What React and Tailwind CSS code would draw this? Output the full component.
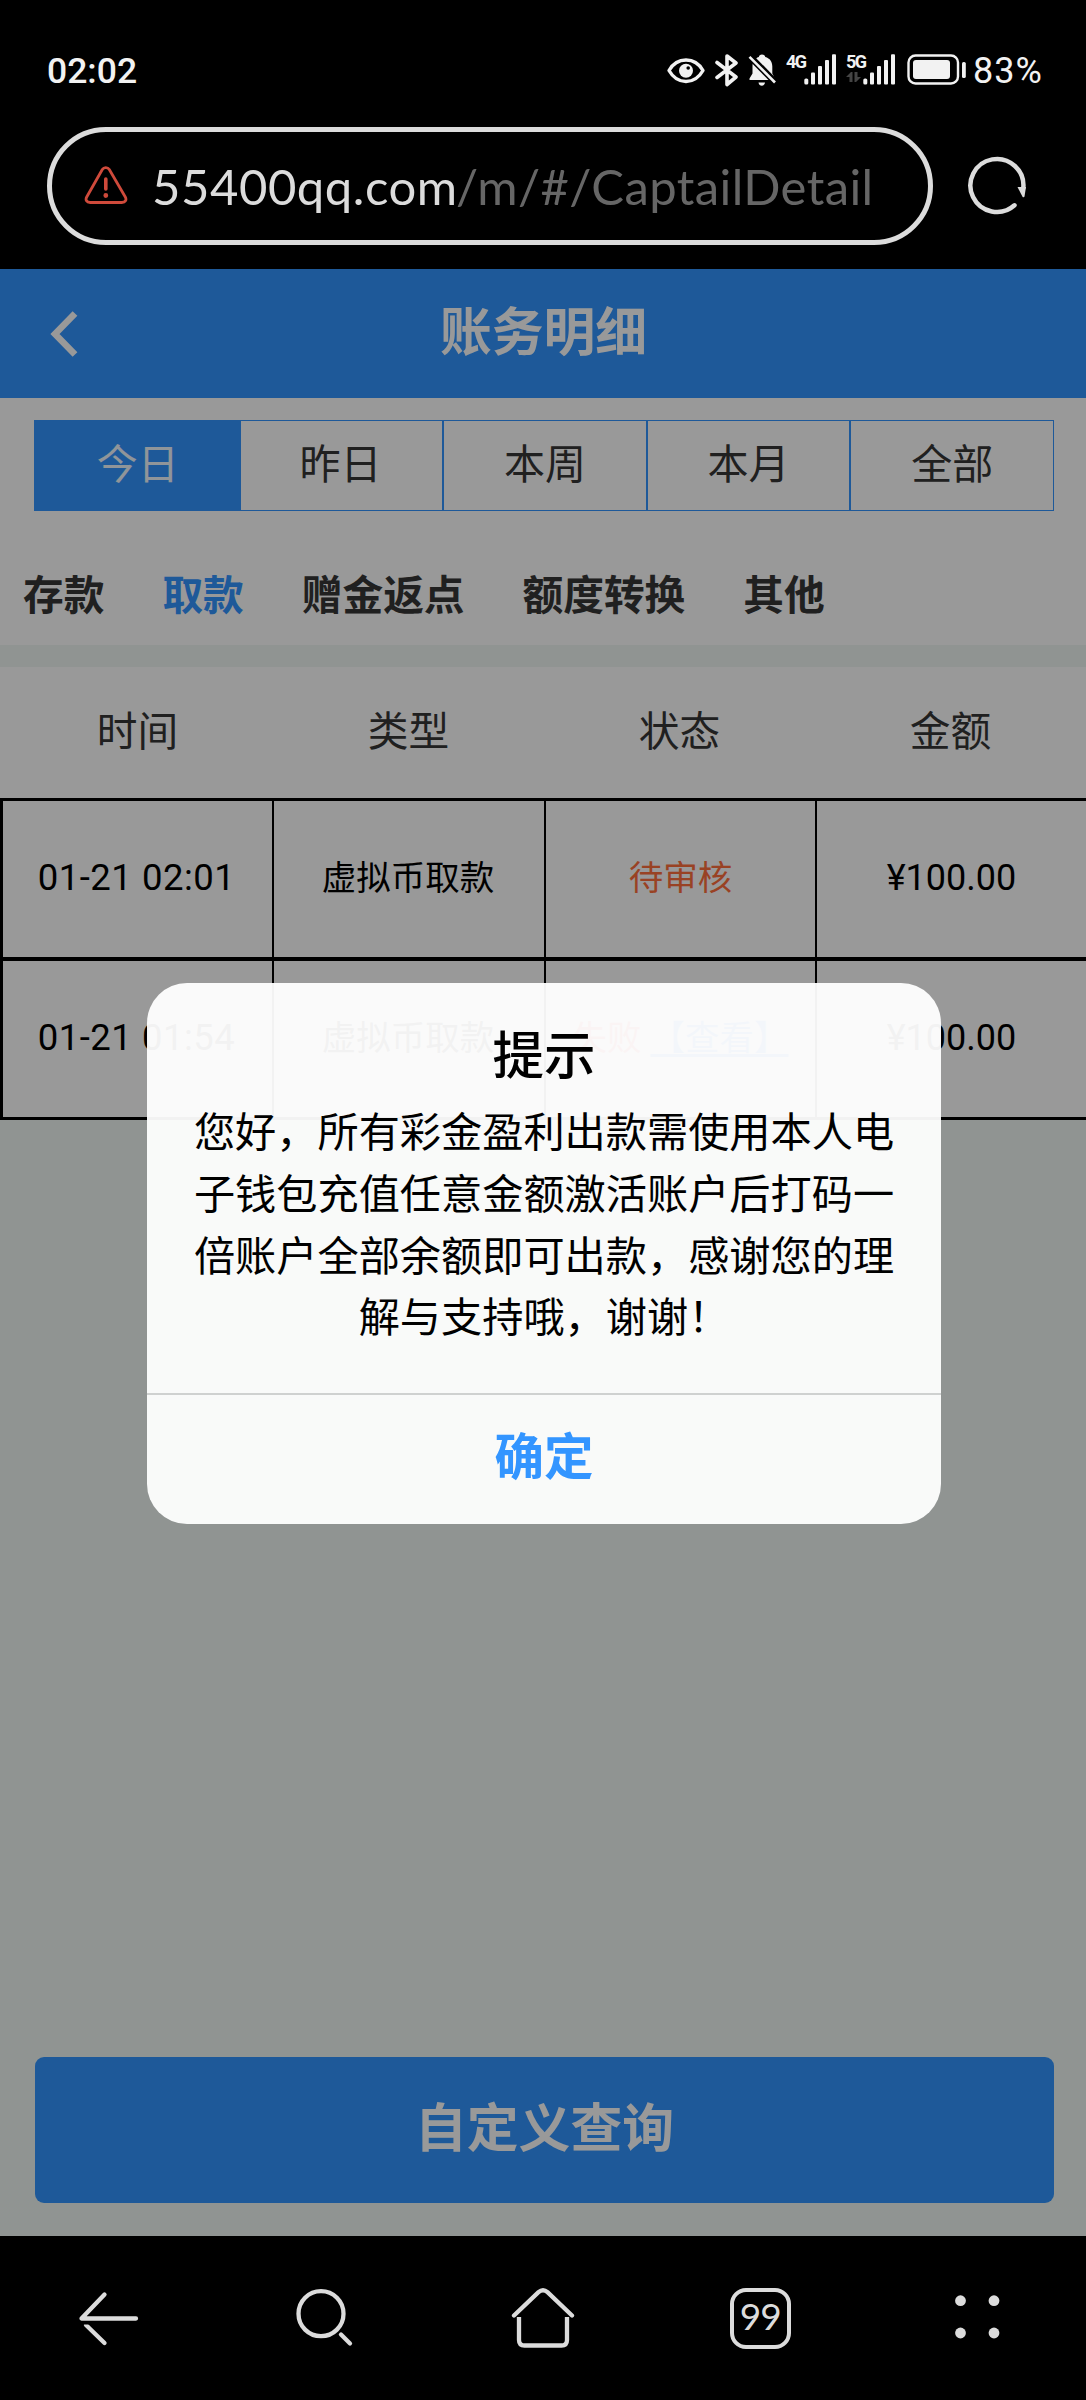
import { useState } from "react";

const RANGES = ["今日", "昨日", "本周", "本月", "全部"];
const CATEGORIES = ["存款", "取款", "赠金返点", "额度转换", "其他"];
const COLUMNS = ["时间", "类型", "状态", "金额"];
const RECORDS = [
  { time: "01-21 02:01", type: "虚拟币取款", status: "pending", money: "¥100.00" },
  { time: "01-21 01:54", type: "虚拟币取款", status: "failed", money: "¥100.00" },
];

const SignalBars = () => (
  <svg width="33" height="31" viewBox="0 0 33 31" fill="#f2f2f2">
    <rect x="0.3" y="24.5" width="4" height="6" rx="1.6" />
    <rect x="7" y="18.5" width="4" height="12" rx="1" />
    <rect x="14" y="12" width="4" height="18.5" rx="1" />
    <rect x="21" y="6" width="4" height="24.5" rx="1" />
    <rect x="28" y="0.3" width="4" height="30.2" rx="1" />
  </svg>
);

const StatusBar = () => (
  <div className="flex h-[127px] items-start justify-between pt-[53px] pl-[47px] pr-[41px] text-[#f2f2f2]">
    <div className="pt-px font-['Roboto'] text-[35.5px] leading-[34px] font-medium">
      02:02
    </div>
    <div className="flex h-[34px] items-start">
      <svg width="38" height="34" viewBox="0 0 38 34" fill="none">
        <path
          d="M2 17.5C6 10.5 12 7 19 7s13 3.500 17 10.500C32 24.500 26 28.500 19 28.500S6 24.500 2 17.500Z"
          stroke="#f2f2f2"
          strokeWidth="3.400"
          strokeLinejoin="round"
        />
        <circle cx="19" cy="17.700" r="7" fill="#f2f2f2" />
        <circle cx="21.200" cy="15" r="1.800" fill="#000" />
      </svg>
      <svg className="ml-[10px]" width="24" height="34" viewBox="0 0 24 34" fill="none">
        <path
          d="M2 9.500l19 14.500-9 7.500V3l9 7L2 24.500"
          stroke="#f2f2f2"
          strokeWidth="3.600"
          strokeLinejoin="round"
          strokeLinecap="round"
        />
      </svg>
      <svg className="ml-[9px]" width="30" height="34" viewBox="0 0 30 34">
        <path
          d="M14 1.500c2 0 3 1.200 3.300 2.600 4.700 1.300 7 4.900 7 9.400v7l2.500 5v1.500H1.500v-1.500l3-5v-7c0-4.500 2.200-8.100 6.300-9.400.3-1.400 1.300-2.600 3.200-2.600Z"
          fill="#f2f2f2"
        />
        <path d="M10.500 29.500h6.500c-.4 2.200-1.600 3.200-3.200 3.200s-2.900-1-3.300-3.200Z" fill="#f2f2f2" />
        <path d="M0 1.500L29 31" stroke="#000" strokeWidth="6.500" />
        <path d="M1.500 3.800L27 29.500" stroke="#f2f2f2" strokeWidth="2.600" />
      </svg>
      <div className="ml-[8px] w-[18px] font-['Roboto'] text-[18px] leading-[18px] font-bold tracking-[-1.5px]">
        4G
      </div>
      <div className="mt-px">
        <SignalBars />
      </div>
      <div className="ml-[9px] w-[17px]">
        <div className="font-['Roboto'] text-[18px] leading-[18px] font-bold tracking-[-1.5px]">
          5G
        </div>
        <svg width="15" height="12" viewBox="0 0 15 12" fill="#444">
          <path d="M0 6l5-5h1.500v10H3.500V6ZM8.500 1h3v5H15l-5 5H8.500Z" />
        </svg>
      </div>
      <div className="mt-px">
        <SignalBars />
      </div>
      <svg className="ml-[11px]" width="60" height="34" viewBox="0 0 60 34">
        <rect x="1.500" y="2.500" width="49.500" height="28" rx="7" fill="none" stroke="#f2f2f2" strokeWidth="2.400" />
        <rect x="6" y="7" width="37" height="19" rx="3" fill="#f2f2f2" />
        <rect x="55" y="9" width="3.800" height="16" rx="1.600" fill="#f2f2f2" />
      </svg>
      <div className="ml-[6px] w-[72px] pt-px font-['Roboto'] text-[36px] leading-[34px] tracking-[1px] whitespace-nowrap">
        83%
      </div>
    </div>
  </div>
);

const AddressBar = () => (
  <div className="flex h-[142px] items-start pl-[47px]">
    <div className="flex h-[118px] w-[886px] items-center rounded-full border-[5px] border-[#dcdcdc] pl-[32px]">
      <svg width="44" height="42" viewBox="0 0 44 42" fill="none" stroke="#cf4a3b">
        <path
          d="M18.300 4.500c1.600-2.600 5.400-2.600 7 0l16 27.500c1.500 2.700.2 5.500-3.500 5.500H6.200c-3.700 0-5-2.800-3.500-5.500Z"
          strokeWidth="2.800"
        />
        <path d="M21.800 14v10" strokeWidth="3.600" strokeLinecap="round" />
        <circle cx="21.800" cy="30.500" r="1.600" strokeWidth="1.600" fill="#cf4a3b" />
      </svg>
      <div className="ml-[24px] flex font-['Lato'] text-[49px] leading-[60px] whitespace-nowrap">
        <span className="w-[304px] tracking-[0.55px] text-[#dcdcdc]">
          55400qq.com
        </span>
        <span className="tracking-[0.4px] text-[#666]">/m/#/CaptailDetail</span>
      </div>
    </div>
    <svg className="mt-[28px] ml-[34px]" width="62" height="62" viewBox="0 0 62 62" fill="none">
      <path
        d="M47.500 50.300A26.500 26.500 0 1 1 56.300 33"
        stroke="#dcdcdc"
        strokeWidth="4.500"
        strokeLinecap="round"
      />
      <path d="M50.500 32h8.500l-1.500 9.500c-.3 1-1.500 1-2 .2Z" fill="#dcdcdc" />
    </svg>
  </div>
);

const RecordStatus = ({ status }) => {
  if (status == "pending") {
    return <span className="text-[#ff6f3c]">待审核</span>;
  }

  return (
    <>
      <span className="mr-[9px] text-[#ff4d4f]">失败</span>
      <span className="text-[#3395ff] underline underline-offset-4">【查看】</span>
    </>
  );
};

const Page = ({ range, setRange, category, setCategory }) => (
  <div className="flex h-full flex-col bg-[#f0f7f3]">
    <div className="flex h-[129px] items-center bg-[#3395ff]">
      <svg className="ml-[48px]" width="32" height="52" viewBox="0 0 32 52" fill="none">
        <path d="M27 5.500L7 26l20 20.500" stroke="#fff" strokeWidth="6.600" />
      </svg>
      <div className="flex-1 pr-[79px] pb-[9px] text-center text-[51.8px] leading-[60px] font-bold text-white">
        账务明细
      </div>
    </div>

    <div className="h-[247px] bg-white pt-[22px]">
      <div className="mx-[34px] grid h-[91px] w-[1020px] grid-cols-5 border border-[#3395ff]">
        {RANGES.map((name, i) => (
          <button
            key={name}
            type="button"
            onClick={() => setRange(i)}
            className={`pb-[9px] text-[41px] leading-[60px] ${
              i == range
                ? "-mr-[2px] bg-[#3395ff] text-[#f0f8ff]"
                : "text-[#363636]"
            } ${i > 1 ? "border-l-2 border-[#3395ff]" : ""}`}
          >
            {name}
          </button>
        ))}
      </div>
      <div className="mt-[52px] flex gap-[58px] pl-[23px] text-[40.7px] leading-[60px] font-bold">
        {CATEGORIES.map((name, i) => (
          <button
            key={name}
            type="button"
            onClick={() => setCategory(i)}
            className={i == category ? "text-[#3395ff]" : "text-[#363636]"}
          >
            {name}
          </button>
        ))}
      </div>
    </div>

    <div className="mt-[22px] grid h-[131px] grid-cols-4 items-center bg-white pb-[7px] pl-[2px] text-center text-[40.7px] leading-[60px] text-[#363636]">
      {COLUMNS.map((name) => (
        <div key={name}>{name}</div>
      ))}
    </div>

    <div className="border-t-[3px] border-l-[3px] border-black bg-white text-[34.500px] text-black">
      {RECORDS.map((item, i) => (
        <div
          key={item.time}
          className={`grid grid-cols-[271px_272px_271px_1fr] border-black text-center ${
            i == 0 ? "h-[160px] border-b-4" : "h-[159px] border-b-[3px]"
          }`}
        >
          <div className="flex items-center justify-center border-r-2 pb-[2px] pr-[2px] font-['Roboto'] text-[36.500px] tracking-[0.5px]">
            {item.time}
          </div>
          <div className="flex items-center justify-center border-r-2 pr-[2px] pb-[6px]">
            {item.type}
          </div>
          <div className="flex items-center justify-center border-r-2 pb-[6px]">
            <RecordStatus status={item.status} />
          </div>
          <div className="flex items-center justify-center pb-[2px] font-['Roboto'] text-[36px]">
            {item.money}
          </div>
        </div>
      ))}
    </div>

    <button
      type="button"
      className="mt-auto mr-[32px] mb-[33px] ml-[35px] h-[146px] rounded-[9px] bg-[#3395ff] pb-[11px] text-[51.800px] font-bold text-white"
    >
      自定义查询
    </button>
  </div>
);

const Dialog = () => (
  <div className="flex h-[541px] w-[794px] flex-col rounded-[40px] bg-white/95 text-center text-black">
    <div className="mt-[37px] text-[51.500px] leading-[64px] font-medium">提示</div>
    <div className="mx-auto mt-[15px] w-[702px] text-[41.200px] leading-[61.800px]">
      您好，所有彩金盈利出款需使用本人电子钱包充值任意金额激活账户后打码一倍账户全部余额即可出款，感谢您的理解与支持哦，谢谢！
    </div>
    <button
      type="button"
      className="mt-auto h-[131px] border-t-2 border-[#cfd1d0] pb-[10px] text-[49.500px] font-bold text-[#3395ff]"
    >
      确定
    </button>
  </div>
);

const NavBar = () => (
  <div className="grid h-[164px] grid-cols-5 justify-items-center pt-[49px]">
    <svg width="66" height="66" viewBox="0 0 66 66" fill="none" stroke="#dcdcdc" strokeWidth="4.300" strokeLinecap="round">
      <path d="M60 33.500H5.500L28.500 9.500" strokeLinejoin="round" />
      <path d="M10 40L28.500 58" />
      <path d="M4 38h10" stroke="#000" strokeWidth="3" />
    </svg>
    <svg width="66" height="66" viewBox="0 0 66 66" fill="none" stroke="#dcdcdc" strokeWidth="4.300" strokeLinecap="round">
      <circle cx="28" cy="28.700" r="22.500" />
      <path d="M48 49.500l9 9" />
    </svg>
    <svg width="66" height="66" viewBox="0 0 66 66" fill="none" stroke="#dcdcdc" strokeWidth="4.300" strokeLinecap="round">
      <path d="M4 30.500L28.500 7.200Q33 3.200 37.500 7.200L62 30.500" />
      <path d="M9 32v23q0 5.500 5.500 5.500h37q5.500 0 5.500-5.500V32" strokeLinecap="butt" />
    </svg>
    <div className="mt-[3px] h-[61px] w-[61px] rounded-[16px] border-[4.500px] border-[#dcdcdc] text-center font-['Lato'] text-[37px] leading-[47px] tracking-[-1px] text-[#dcdcdc]">
      99
    </div>
    <svg width="66" height="66" viewBox="0 0 66 66" fill="#dcdcdc">
      <circle cx="16.500" cy="15.700" r="5.400" />
      <circle cx="50" cy="15.700" r="5.400" />
      <circle cx="16.500" cy="48" r="5.400" />
      <circle cx="50" cy="48" r="5.400" />
    </svg>
  </div>
);

const App = () => {
  const [range, setRange] = useState(0);
  const [category, setCategory] = useState(1);

  return (
    <div className="h-[2400px] w-[1086px] overflow-hidden bg-black font-['Noto_Sans_CJK_SC',sans-serif]">
      <StatusBar />
      <AddressBar />
      <div className="relative h-[1967px]">
        <Page
          range={range}
          setRange={setRange}
          category={category}
          setCategory={setCategory}
        />
        <div className="absolute inset-0 flex items-start justify-center bg-black/40 pt-[714px] pl-[2px]">
          <Dialog />
        </div>
      </div>
      <NavBar />
    </div>
  );
};

export default App;
